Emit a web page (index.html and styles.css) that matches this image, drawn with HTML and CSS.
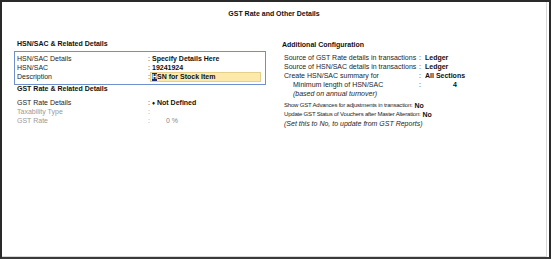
FILE: index.html
```html
<!DOCTYPE html>
<html>
<head>
<meta charset="utf-8">
<link rel="stylesheet" href="styles.css">
</head>
<body>
<div class="frame">
  <div class="inner">
    <div class="title">GST Rate and Other Details</div>
    <div class="content">
      <div class="col-left">
        <div class="heading h1">HSN/SAC &amp; Related Details</div>
        <div class="box">
          <div class="row"><span class="lbl">HSN/SAC Details</span><span class="colon">:</span><span class="val b">Specify Details Here</span></div>
          <div class="row"><span class="lbl">HSN/SAC</span><span class="colon">:</span><span class="val b">19241924</span></div>
          <div class="row"><span class="lbl">Description</span><span class="colon">:</span><span class="val b edit"><span class="cursor">H</span>SN for Stock Item</span></div>
        </div>
        <div class="heading h2">GST Rate &amp; Related Details</div>
        <div class="rows2">
          <div class="row"><span class="lbl">GST Rate Details</span><span class="colon">:</span><span class="val b"><span class="dia">♦</span> Not Defined</span></div>
          <div class="row dim"><span class="lbl">Taxability Type</span><span class="colon">:</span><span class="val"></span></div>
          <div class="row dim"><span class="lbl">GST Rate</span><span class="colon">:</span><span class="val pct">0 %</span></div>
        </div>
      </div>
      <div class="col-right">
        <div class="heading h1r">Additional Configuration</div>
        <div class="rrows">
          <div class="row"><span class="rl">Source of GST Rate details in transactions</span><span class="rc">:</span><span class="val b">Ledger</span></div>
          <div class="row"><span class="rl">Source of HSN/SAC details in transactions</span><span class="rc">:</span><span class="val b">Ledger</span></div>
          <div class="row"><span class="rl">Create HSN/SAC summary for</span><span class="rc">:</span><span class="val b">All Sections</span></div>
          <div class="row"><span class="rl ind">Minimum length of HSN/SAC</span><span class="rc">:</span><span class="val b num">4</span></div>
          <div class="row"><span class="rl ind it">(based on annual turnover)</span></div>
        </div>
        <div class="srows">
          <div class="row"><span class="sl">Show GST Advances for adjustments in transaction:</span><span class="val b">No</span></div>
          <div class="row"><span class="sl">Update GST Status of Vouchers after Master Alteration:</span><span class="val b">No</span></div>
          <div class="row"><span class="it">(Set this to No, to update from GST Reports)</span></div>
        </div>
      </div>
    </div>
  </div>
</div>
</body>
</html>
```

FILE: styles.css
```css
* { box-sizing: border-box; }
html, body { margin: 0; padding: 0; background: #ffffff; }
body {
  font-family: "Liberation Sans", Arial, sans-serif;
  font-size: 7px;
  color: #1e1e1e;
  width: 552px;
  height: 259px;
  overflow: hidden;
}
.frame {
  width: 551px;
  height: 259px;
  border-top: 2px solid #2a2a2a;
  border-left: 2px solid #2a2a2a;
  border-right: 2px solid #2a2a2a;
  border-bottom: 2px solid #3a3a3a;
  background: #fff;
}
.inner {
  height: 100%;
  border-right: 1px solid #d8d8d8;
  margin-right: 2px;
  border-bottom: 1px solid #d8d8d8;
}
.title {
  text-align: center;
  font-weight: bold;
  font-size: 7px;
  line-height: 9px;
  padding-top: 7px;
  color: #111;
}
.content {
  display: grid;
  grid-template-columns: 252px 1fr;
  column-gap: 12px;
  padding-left: 12px;
  padding-top: 21px;
}
.heading { font-weight: bold; color: #111; line-height: 9px; }
.h1 { padding-left: 3px; margin-bottom: 3px; }
.h2 { padding-left: 3px; line-height: 7px; }
.h1r { padding-left: 4px; margin-top: 1px; margin-bottom: 4px; }
.row { display: flex; line-height: 9px; height: 9px; white-space: nowrap; }
.box {
  border: 1px solid #6f8fce;
  padding: 2px 0 3px 2px;
}
.lbl { width: 131px; }
.colon { width: 4px; }
.b { font-weight: bold; color: #111; }
.edit {
  display: flex;
  align-items: center;
  background: #fde9a9;
  border: 1px solid #e6cf8a;
  width: 111px;
  height: 10px;
  margin-left: -2px;
  margin-top: -0.5px;
  padding-left: 1px;
}
.cursor {
  background: #1d2f6b;
  color: #fff;
  display: inline-block;
  line-height: 8px;
}
.rows2 { padding-left: 3px; margin-top: 6px; }
.dia { font-size: 6px; }
.dim { color: #9a9a9a; }
.pct { padding-left: 14px; color: #888; }
.rrows { padding-left: 6px; }
.rl { width: 135px; }
.rc { width: 6px; }
.ind { padding-left: 9px; }
.it { font-style: italic; }
.num { width: 32px; text-align: right; }
.srows { padding-left: 6px; margin-top: 3px; }
.sl { font-size: 6px; letter-spacing: -0.2px; padding-right: 2px; }
```
